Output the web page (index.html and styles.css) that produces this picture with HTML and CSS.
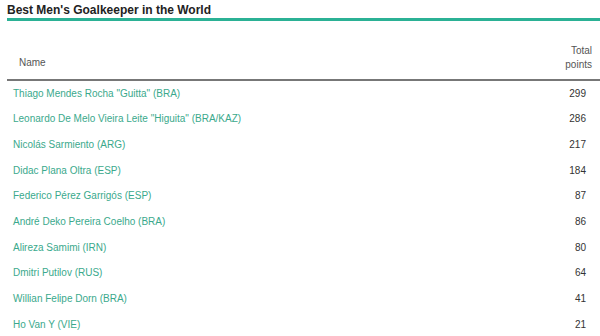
FILE: index.html
```html
<!DOCTYPE html>
<html>
<head>
<meta charset="utf-8">
<link rel="stylesheet" href="styles.css">
</head>
<body>
<div class="widget">
  <h2 class="title">Best Men's Goalkeeper in the World</h2>
  <table class="ranking">
    <thead>
      <tr><th class="name-h">Name</th><th class="pts-h">Total<br>points</th></tr>
    </thead>
    <tbody>
      <tr><td class="name">Thiago Mendes Rocha "Guitta" (BRA)</td><td class="pts">299</td></tr>
      <tr><td class="name">Leonardo De Melo Vieira Leite "Higuita" (BRA/KAZ)</td><td class="pts">286</td></tr>
      <tr><td class="name">Nicolás Sarmiento (ARG)</td><td class="pts">217</td></tr>
      <tr><td class="name">Didac Plana Oltra (ESP)</td><td class="pts">184</td></tr>
      <tr><td class="name">Federico Pérez Garrigós (ESP)</td><td class="pts">87</td></tr>
      <tr><td class="name">André Deko Pereira Coelho (BRA)</td><td class="pts">86</td></tr>
      <tr><td class="name">Alireza Samimi (IRN)</td><td class="pts">80</td></tr>
      <tr><td class="name">Dmitri Putilov (RUS)</td><td class="pts">64</td></tr>
      <tr><td class="name">Willian Felipe Dorn (BRA)</td><td class="pts">41</td></tr>
      <tr><td class="name">Ho Van Y (VIE)</td><td class="pts">21</td></tr>
    </tbody>
  </table>
</div>
</body>
</html>
```
FILE: styles.css
```css
html, body {
  margin: 0;
  padding: 0;
  background: #fff;
}
body {
  font-family: "Liberation Sans", Arial, sans-serif;
}
.widget {
  padding-left: 7px;
}
.title {
  margin: 0;
  padding-top: 3px;
  font-size: 12px;
  line-height: 15px;
  font-weight: bold;
  color: #222;
  border-bottom: 3px solid #2bb195;
}
.ranking {
  width: 100%;
  border-collapse: collapse;
  font-size: 10px;
}
.ranking thead th {
  font-weight: normal;
  color: #555;
  line-height: 14px;
  border-bottom: 2px solid #777;
  vertical-align: bottom;
}
.name-h {
  text-align: left;
  padding: 0 0 9px 12px;
}
.pts-h {
  text-align: right;
  padding: 23px 8px 7px 0;
}
.ranking td {
  height: 25.67px;
  line-height: 12px;
  padding: 0;
  vertical-align: middle;
}
.name {
  color: #3aa98c;
  padding-left: 6px !important;
}
.pts {
  color: #333;
  text-align: right;
  padding-right: 14px !important;
}
```
